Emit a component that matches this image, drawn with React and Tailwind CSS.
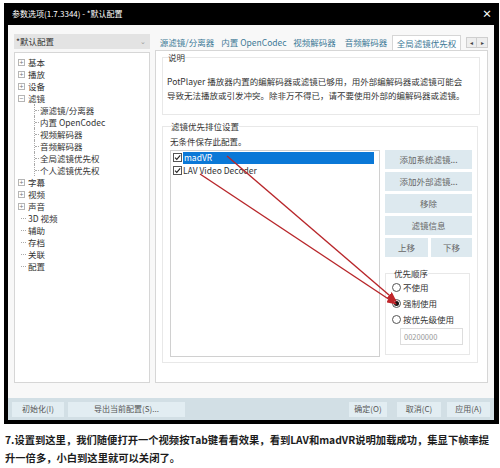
import React from "react";

const font = "font-['Noto_Sans_CJK_SC','Noto_Sans',sans-serif]";

const Expander = ({ open }) => (
  <div className="flex h-[7px] w-[7px] items-center justify-center border border-[#b5b5b5] bg-white text-[7px] leading-none text-[#777]">
    {open ? "−" : "+"}
  </div>
);

const TopItem = ({ label, expander, open }) => (
  <div className="flex h-[12px] items-center">
    {expander ? (
      <>
        <div className="w-[3px]" />
        <Expander open={open} />
        <span className="ml-[3px]">{label}</span>
      </>
    ) : (
      <>
        <div className="w-[6px]" />
        <div className="w-[5px] border-t border-dotted border-[#aaa]" />
        <span className="ml-[2px]">{label}</span>
      </>
    )}
  </div>
);

const ChildItem = ({ label }) => (
  <div className="flex h-[12px] items-center">
    <div className="w-[19px]" />
    <div className="flex h-full w-[5px] items-center border-l border-dotted border-[#aaa]">
      <div className="w-full border-t border-dotted border-[#aaa]" />
    </div>
    <span className="ml-[1px]">{label}</span>
  </div>
);

const SideButton = ({ children, className = "" }) => (
  <div
    className={
      "flex h-[19px] items-center justify-center bg-[#dde9ef] text-[#666] " +
      className
    }
  >
    {children}
  </div>
);

const CheckBox = () => (
  <svg width="9" height="9" viewBox="0 0 9 9" className="shrink-0">
    <rect x="0.5" y="0.5" width="8" height="8" fill="#fff" stroke="#555" />
    <path d="M2 4.6 L3.8 6.4 L7.2 2.4" fill="none" stroke="#222" strokeWidth="1.1" />
  </svg>
);

const Radio = ({ checked, label }) => (
  <div className="flex h-[14px] items-center">
    <div className="flex h-[9px] w-[9px] items-center justify-center rounded-full border border-[#555] bg-white">
      {checked && <div className="h-[5px] w-[5px] rounded-full bg-[#111]" />}
    </div>
    <span className="ml-[2px]">{label}</span>
  </div>
);

const BottomButton = ({ children, w }) => (
  <div className={"flex h-[15px] items-center justify-center bg-[#e2edf2] text-[8px] text-[#555] " + w}>
    {children}
  </div>
);

export default function App() {
  return (
    <div className={"relative h-[468px] w-[500px] overflow-hidden bg-white " + font}>
      <div className="ml-[4px] mt-[3px] w-[495px] bg-black pb-[4px] pl-[4px] pr-[5px]">
        {/* title bar */}
        <div className="flex h-[22px] items-center justify-between pl-[4px] pr-[2px] text-white">
          <span className="text-[8px]">参数选项(1.7.3344) - *默认配置</span>
          <span className="text-[10px] font-bold leading-none">×</span>
        </div>

        <div className="bg-[#f8f8f8] text-[8.5px] text-[#333]">
          <div className="flex h-[373px] px-[6px] pt-[9px]">
            {/* left column */}
            <div className="flex w-[136px] flex-col">
              <div className="flex h-[15px] items-center justify-between bg-[#e3e3e3] pl-[2px] pr-[4px]">
                <span>*默认配置</span>
                <span className="text-[7px] text-[#999]">⌄</span>
              </div>
              <div className="mt-[3px] h-[331px] border border-[#d6d6d6] bg-white pt-[3px]">
                <TopItem label="基本" expander />
                <TopItem label="播放" expander />
                <TopItem label="设备" expander />
                <TopItem label="滤镜" expander open />
                <ChildItem label="源滤镜/分离器" />
                <ChildItem label="内置 OpenCodec" />
                <ChildItem label="视频解码器" />
                <ChildItem label="音频解码器" />
                <ChildItem label="全局滤镜优先权" />
                <ChildItem label="个人滤镜优先权" />
                <TopItem label="字幕" expander />
                <TopItem label="视频" expander />
                <TopItem label="声音" expander />
                <TopItem label="3D 视频" />
                <TopItem label="辅助" />
                <TopItem label="存档" />
                <TopItem label="关联" />
                <TopItem label="配置" />
              </div>
            </div>

            {/* right column */}
            <div className="ml-[5px] flex w-[333px] flex-col">
              <div className="flex h-[16px] items-end text-[#3c7896]">
                <div className="flex h-[15px] w-[64px] items-center justify-center">源滤镜/分离器</div>
                <div className="flex h-[15px] w-[70px] items-center justify-center">内置 OpenCodec</div>
                <div className="flex h-[15px] w-[51px] items-center justify-center">视频解码器</div>
                <div className="flex h-[15px] w-[52px] items-center justify-center">音频解码器</div>
                <div className="-mb-px flex h-[16px] w-[69px] items-center justify-center border border-b-0 border-[#d6d6d6] bg-white">
                  全局滤镜优先权
                </div>
                <div className="mb-[2px] ml-[5px] flex h-[11px]">
                  <div className="flex w-[11px] items-center justify-center border border-[#cfcfcf] bg-[#eee] text-[6px] text-[#444]">◂</div>
                  <div className="flex w-[11px] items-center justify-center border border-l-0 border-[#cfcfcf] bg-[#eee] text-[6px] text-[#444]">▸</div>
                </div>
              </div>

              <div className="h-[333px] border border-[#d6d6d6] bg-white pl-[6px] pt-[1px]">
                <fieldset className="h-[63px] w-[318px] border border-[#e8e8e8] px-[4px]">
                  <legend className="ml-[1px] leading-[10px]">说明</legend>
                  <div className="pt-[12px] leading-[14px]">
                    <div>PotPlayer 播放器内置的编解码器或滤镜已够用，用外部编解码器或滤镜可能会</div>
                    <div>导致无法播放或引发冲突。除非万不得已，请不要使用外部的编解码器或滤镜。</div>
                  </div>
                </fieldset>

                <fieldset className="mt-[6px] h-[242px] w-[316px] border border-[#e8e8e8] pl-[7px]">
                  <legend className="ml-[1px] leading-[10px]">滤镜优先排位设置</legend>
                  <div className="pt-[4px] leading-[12px]">无条件保存此配置。</div>
                  <div className="mt-[3px] flex">
                    <div className="h-[207px] w-[210px] border border-[#d0d0d0] bg-white pl-[2px]">
                      <div className="flex h-[13px] items-center">
                        <CheckBox />
                        <div className="ml-[1px] flex h-[12px] w-[191px] items-center bg-[#0a78d7] pl-px text-white">
                          madVR
                        </div>
                      </div>
                      <div className="flex h-[13px] items-center">
                        <CheckBox />
                        <span className="ml-[1px]">LAV Video Decoder</span>
                      </div>
                    </div>

                    <div className="ml-[5px] flex w-[87px] flex-col">
                      <div className="flex flex-col gap-[3px]">
                        <SideButton>添加系统滤镜...</SideButton>
                        <SideButton>添加外部滤镜...</SideButton>
                        <SideButton>移除</SideButton>
                        <SideButton>滤镜信息</SideButton>
                        <div className="flex gap-[3px]">
                          <SideButton className="w-[43px]">上移</SideButton>
                          <SideButton className="flex-1">下移</SideButton>
                        </div>
                      </div>
                      <fieldset className="mt-[11px] h-[87px] w-[85px] border border-[#e8e8e8] pl-[6px]">
                        <legend className="ml-[2px] leading-[10px]">优先顺序</legend>
                        <div className="flex flex-col gap-[2px] pt-[2px]">
                          <Radio label="不使用" />
                          <Radio label="强制使用" checked />
                          <Radio label="按优先级使用" />
                        </div>
                        <div className="ml-[8px] mt-[2px] flex h-[17px] w-[63px] items-center border border-[#ddd] bg-white pl-[3px] text-[7.5px] text-[#999]">
                          00200000
                        </div>
                      </fieldset>
                    </div>
                  </div>
                </fieldset>
              </div>
            </div>
          </div>

          {/* bottom bar */}
          <div className="flex h-[22px] items-center bg-[#d2dfe5] px-[4px]">
            <BottomButton w="w-[52px]">初始化(I)</BottomButton>
            <BottomButton w="ml-[4px] w-[117px]">导出当前配置(S)...</BottomButton>
            <div className="flex-1" />
            <BottomButton w="w-[38px]">确定(O)</BottomButton>
            <BottomButton w="ml-[10px] w-[44px]">取消(C)</BottomButton>
            <BottomButton w="ml-[6px] w-[43px]">应用(A)</BottomButton>
          </div>
        </div>
      </div>

      {/* caption */}
      <div className="mt-[7px] whitespace-nowrap pl-[5px] text-[10.3px] font-bold leading-[18px] text-[#1c1c1c]">
        <div>7.设置到这里，我们随便打开一个视频按Tab键看看效果，看到LAV和madVR说明加载成功，集显下帧率提</div>
        <div>升一倍多，小白到这里就可以关闭了。</div>
      </div>

      {/* red annotation arrows */}
      <svg className="pointer-events-none absolute left-0 top-0" width="500" height="468" viewBox="0 0 500 468">
        <defs>
          <marker id="ah" markerUnits="userSpaceOnUse" markerWidth="10" markerHeight="8" refX="9" refY="4" orient="auto">
            <path d="M0 0 L10 4 L0 8 Z" fill="#c0262b" />
          </marker>
        </defs>
        <line x1="227" y1="156" x2="396" y2="301" stroke="#b8262a" strokeWidth="1.4" markerEnd="url(#ah)" />
        <line x1="200" y1="174" x2="396" y2="304" stroke="#b8262a" strokeWidth="1.4" markerEnd="url(#ah)" />
      </svg>
    </div>
  );
}
